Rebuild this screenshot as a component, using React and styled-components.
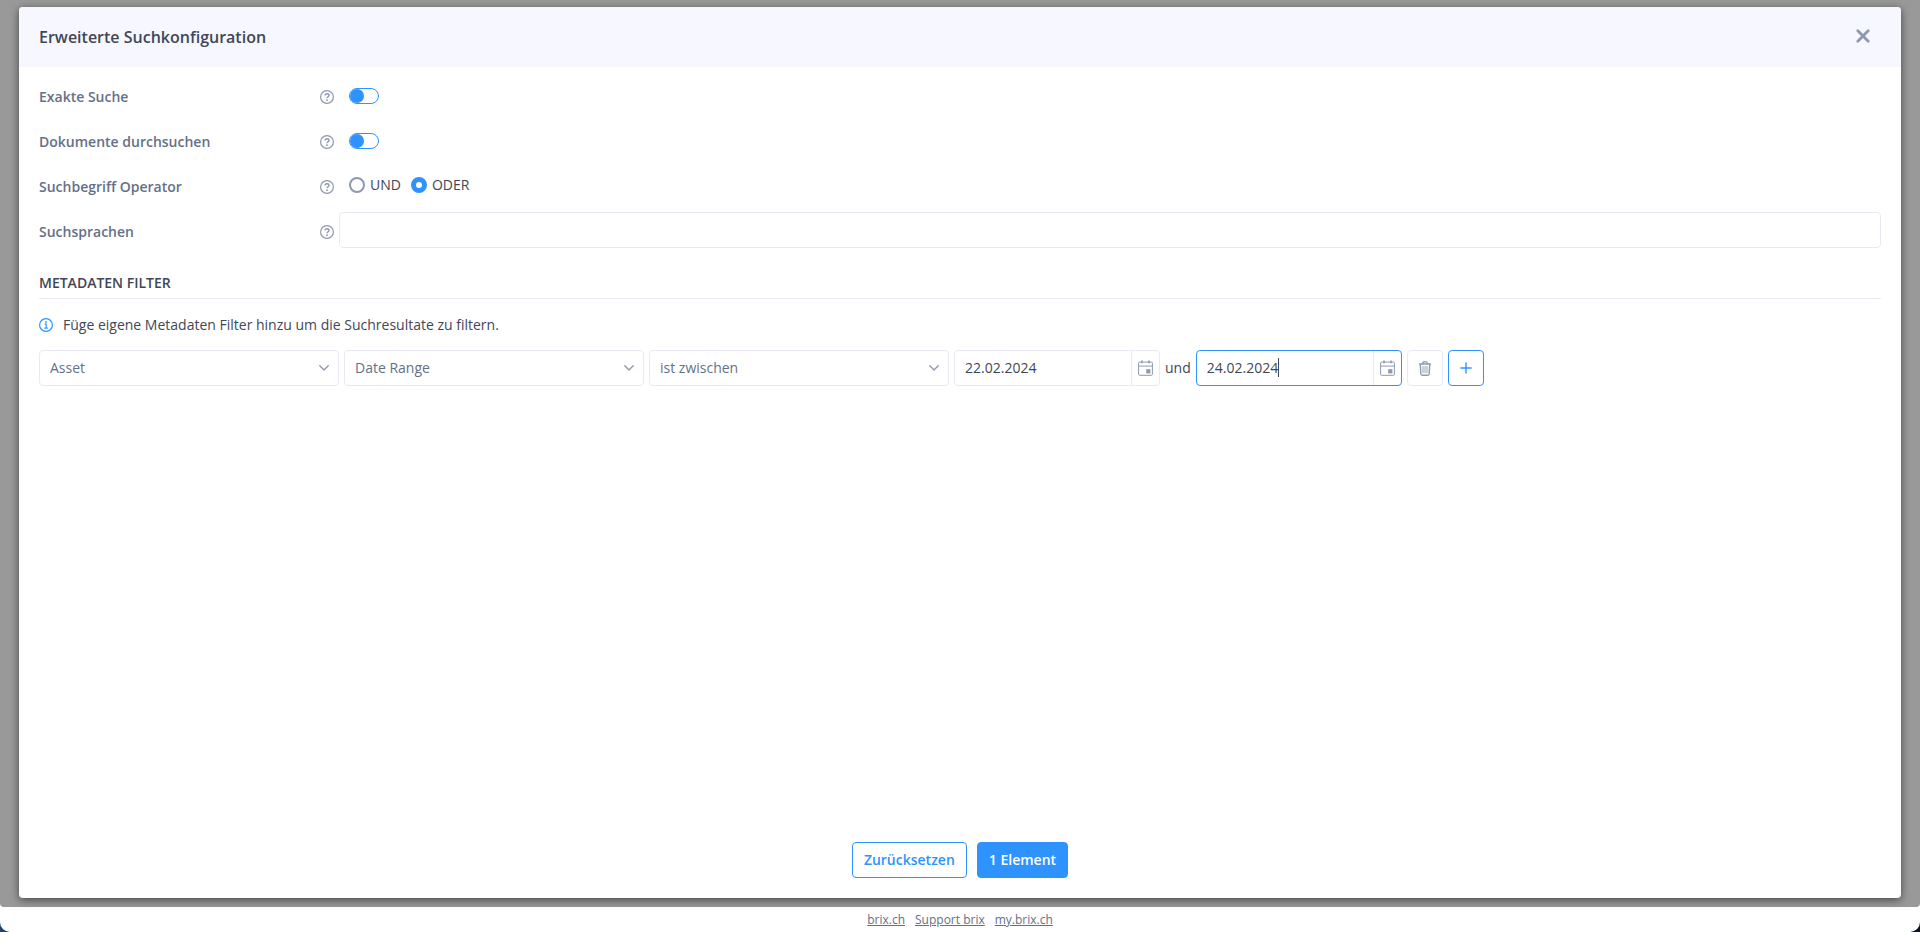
import { useId, useState } from "react";
import styled, { createGlobalStyle, ThemeProvider } from "styled-components";

const theme = {
  text: "#3f4757",
  label: "#657088",
  icon: "#8d99b0",
  primary: "#2f93ff",
  border: "#e8e9f4",
  header: "#f7f7ff",
};

const GlobalStyle = createGlobalStyle`
  *, *::before, *::after {
    box-sizing: border-box;
  }

  body {
    margin: 0;
    background: linear-gradient(90deg, #1c4470, #0c1422);
    color: ${theme.text};
    font-family: "Open Sans", "Noto Sans", sans-serif;
    font-size: 14px;
    line-height: 20px;
  }

  button, input, select {
    margin: 0;
    color: inherit;
    font: inherit;
  }

  svg {
    display: block;
    flex: none;
  }
`;

const Page = styled.div`
  display: flex;
  flex-direction: column;
  min-height: 100vh;
  background: #fff;
  border-radius: 0 0 10px 10px;
  overflow: hidden;
`;

const Backdrop = styled.main`
  display: flex;
  flex: 1;
  padding: 7px 19px 9px;
  background: #999;
  border-radius: 0 0 4px 4px;
`;

const Dialog = styled.section`
  display: flex;
  flex: 1;
  flex-direction: column;
  min-width: 0;
  background: #fff;
  border-radius: 4px;
  box-shadow: 0 2px 8px rgba(0, 0, 0, 0.55);
  overflow: hidden;
`;

const Header = styled.header`
  display: flex;
  align-items: center;
  justify-content: space-between;
  height: 60px;
  padding: 0 20px;
  background: ${(props) => props.theme.header};
`;

const Title = styled.h1`
  margin: 0;
  font-size: 16px;
  font-weight: 600;
`;

const CloseButton = styled.button`
  display: flex;
  align-items: center;
  justify-content: center;
  width: 36px;
  height: 36px;
  padding: 0 0 2px;
  background: none;
  border: 0;
  color: ${(props) => props.theme.icon};
  cursor: pointer;
`;

const Content = styled.div`
  flex: 1;
  padding: 10px 20px;
`;

const Form = styled.div`
  display: flex;
  flex-direction: column;
  gap: 5px;
`;

const Row = styled.div`
  display: grid;
  grid-template-columns: 281px 19px 1fr;
  align-items: start;
`;

const Label = styled.label`
  color: ${(props) => props.theme.label};
  font-weight: 600;
  line-height: 40px;
`;

const Help = styled.span`
  display: flex;
  align-items: center;
  height: 40px;
  color: ${(props) => props.theme.icon};
`;

const Control = styled.div`
  display: flex;
  align-items: center;
  gap: 10px;
  height: ${(props) => (props.$switch ? 38 : 36)}px;
  padding-left: 10px;
`;

const Switch = styled.input`
  width: 30px;
  height: 16px;
  appearance: none;
  background: #fff;
  border: 1px solid ${(props) => props.theme.primary};
  border-radius: 8px;
  cursor: pointer;

  &::before {
    content: "";
    display: block;
    width: 14px;
    height: 14px;
    background: ${(props) => props.theme.primary};
    border-radius: 50%;
  }

  &:checked::before {
    margin-left: auto;
  }
`;

const RadioLabel = styled.label`
  display: flex;
  align-items: center;
  gap: 5px;
`;

const Radio = styled.input`
  width: 16px;
  height: 16px;
  appearance: none;
  background: #fff;
  border: 2px solid ${(props) => props.theme.icon};
  border-radius: 50%;
  cursor: pointer;

  &:checked {
    border: 5px solid ${(props) => props.theme.primary};
  }
`;

const TextInput = styled.input`
  width: 100%;
  height: 36px;
  padding: 0 10px;
  background: #fff;
  border: 1px solid ${(props) => props.theme.border};
  border-radius: 4px;
  outline: none;
`;

const SectionTitle = styled.h2`
  margin: 21px 0 0;
  padding-bottom: 5px;
  border-bottom: 1px solid ${(props) => props.theme.border};
  font-size: 14px;
  font-weight: 600;
  text-transform: uppercase;
`;

const Hint = styled.p`
  display: flex;
  align-items: center;
  gap: 10px;
  margin: 16px 0 15px;

  svg {
    color: ${(props) => props.theme.primary};
  }
`;

const FilterRow = styled.div`
  display: flex;
  flex-wrap: wrap;
  align-items: center;
  gap: 5px;
`;

const SelectBox = styled.div`
  display: grid;
  width: 300px;
  align-items: center;
  color: ${(props) => props.theme.label};

  > * {
    grid-area: 1 / 1;
  }

  svg {
    justify-self: end;
    margin-right: 10px;
    color: ${(props) => props.theme.icon};
    pointer-events: none;
  }
`;

const Select = styled.select`
  width: 100%;
  height: 36px;
  padding: 0 30px 0 10px;
  appearance: none;
  background: #fff;
  border: 1px solid ${(props) => props.theme.border};
  border-radius: 4px;
`;

const DateBox = styled.div`
  position: relative;
  display: flex;
  width: 206px;
  height: 36px;
  border: 1px solid
    ${(props) => (props.$active ? props.theme.primary : props.theme.border)};
  border-radius: 4px;
`;

const DateInput = styled.input`
  flex: 1;
  min-width: 0;
  padding: 0 10px;
  background: none;
  border: 0;
  outline: none;
  caret-color: transparent;
`;

const Caret = styled.span`
  position: absolute;
  top: 7px;
  left: 81px;
  width: 1px;
  height: 19px;
  background: ${(props) => props.theme.text};
`;

const CalendarButton = styled.button`
  display: flex;
  align-items: center;
  justify-content: center;
  width: 28px;
  padding: 0;
  background: none;
  border: 0;
  border-left: 1px solid ${(props) => props.theme.border};
  color: ${(props) => props.theme.icon};
  cursor: pointer;
`;

const IconButton = styled.button`
  display: flex;
  align-items: center;
  justify-content: center;
  width: 36px;
  height: 36px;
  padding: 0;
  background: #fff;
  border: 1px solid
    ${(props) => (props.$primary ? props.theme.primary : props.theme.border)};
  border-radius: 4px;
  color: ${(props) => (props.$primary ? props.theme.primary : props.theme.icon)};
  cursor: pointer;
`;

const Actions = styled.div`
  display: flex;
  justify-content: center;
  gap: 10px;
  padding-bottom: 20px;
`;

const Button = styled.button`
  height: 36px;
  padding: 0 11px;
  background: ${(props) => (props.$filled ? props.theme.primary : "#fff")};
  border: 1px solid ${(props) => props.theme.primary};
  border-radius: 4px;
  color: ${(props) => (props.$filled ? "#fff" : props.theme.primary)};
  font-weight: 600;
  cursor: pointer;
`;

const Footer = styled.footer`
  display: flex;
  justify-content: center;
  gap: 10px;
  height: 25px;
  font-size: 12px;
  line-height: 25px;
`;

const FooterLink = styled.a`
  color: ${(props) => props.theme.label};
`;

const HelpIcon = () => (
  <svg width="14" height="14" viewBox="0 0 14 14" fill="none" stroke="currentColor" strokeWidth="1.2">
    <circle cx="7" cy="7" r="6.4" />
    <path d="M5 5.6C5 4.4 5.9 3.8 7 3.8s2 .6 2 1.6C9 6.7 7 6.8 7 8.3" strokeWidth="1.4" />
    <circle cx="7" cy="10.2" r="0.9" fill="currentColor" stroke="none" />
  </svg>
);

const InfoIcon = () => (
  <svg width="14" height="14" viewBox="0 0 14 14" fill="none" stroke="currentColor" strokeWidth="1.2">
    <circle cx="7" cy="7" r="6.4" />
    <path d="M5.6 6.2h1.6v4M5.4 10.2h3.4" />
    <circle cx="7" cy="4" r="0.9" fill="currentColor" stroke="none" />
  </svg>
);

const CloseIcon = () => (
  <svg width="14" height="14" viewBox="0 0 14 14" fill="none" stroke="currentColor" strokeWidth="2.8" strokeLinecap="round">
    <path d="M1.8 1.8l10.4 10.4M12.2 1.8L1.8 12.2" />
  </svg>
);

const ChevronIcon = () => (
  <svg width="10" height="6" viewBox="0 0 10 6" fill="none" stroke="currentColor" strokeWidth="1.4" strokeLinecap="round" strokeLinejoin="round">
    <path d="M0.8 0.8L5 5l4.2-4.2" />
  </svg>
);

const CalendarIcon = () => (
  <svg width="15" height="16" viewBox="0 0 15 16" fill="none" stroke="currentColor">
    <rect x="0.6" y="2.1" width="13.8" height="13.2" rx="1" />
    <path d="M0.6 6.1h13.8" />
    <path d="M4 0.6v2.6M11 0.6v2.6" strokeWidth="1.6" />
    <rect x="8.2" y="9.2" width="4.2" height="4.2" fill="currentColor" stroke="none" />
  </svg>
);

const TrashIcon = () => (
  <svg width="12" height="15" viewBox="0 0 12 15" fill="none" stroke="currentColor" strokeLinecap="round">
    <path d="M0.7 3h10.6" strokeWidth="1.4" />
    <path d="M3.7 2.6C3.7 1.2 4.3 0.7 6 0.7s2.3.5 2.3 1.9" strokeWidth="1.3" />
    <path d="M1.3 3.4l.5 9.4c.1 1 .6 1.5 1.5 1.5h5.4c.9 0 1.4-.5 1.5-1.5l.5-9.4" strokeWidth="1.4" />
    <path d="M4 5.4v6.4M6 5.4v6.4M8 5.4v6.4" strokeWidth="0.9" />
  </svg>
);

const PlusIcon = () => (
  <svg width="12" height="12" viewBox="0 0 12 12" fill="none" stroke="currentColor" strokeWidth="1.4" strokeLinecap="round">
    <path d="M6 0.9v10.2M0.9 6h10.2" />
  </svg>
);

/* eslint-disable react/prop-types */
function SwitchRow({ label }) {
  const id = useId();

  return (
    <Row>
      <Label htmlFor={id}>{label}</Label>
      <Help>
        <HelpIcon />
      </Help>
      <Control $switch>
        <Switch id={id} type="checkbox" role="switch" />
      </Control>
    </Row>
  );
}

function FilterSelect({ label, value }) {
  return (
    <SelectBox>
      <Select aria-label={label} defaultValue={value}>
        <option>{value}</option>
      </Select>
      <ChevronIcon />
    </SelectBox>
  );
}

function DateField({ label, value, active }) {
  return (
    <DateBox $active={active}>
      <DateInput type="text" aria-label={label} defaultValue={value} />
      {active && <Caret />}
      <CalendarButton type="button" aria-label="Kalender">
        <CalendarIcon />
      </CalendarButton>
    </DateBox>
  );
}

function App() {
  const [operator, setOperator] = useState("ODER");

  return (
    <ThemeProvider theme={theme}>
      <GlobalStyle />
      <Page>
        <Backdrop>
          <Dialog role="dialog" aria-labelledby="dialog-title">
            <Header>
              <Title id="dialog-title">Erweiterte Suchkonfiguration</Title>
              <CloseButton type="button" aria-label="Schliessen">
                <CloseIcon />
              </CloseButton>
            </Header>

            <Content>
              <Form>
                <SwitchRow label="Exakte Suche" />
                <SwitchRow label="Dokumente durchsuchen" />

                <Row role="radiogroup" aria-labelledby="operator">
                  <Label as="span" id="operator">
                    Suchbegriff Operator
                  </Label>
                  <Help>
                    <HelpIcon />
                  </Help>
                  <Control>
                    {["UND", "ODER"].map((name) => (
                      <RadioLabel key={name}>
                        <Radio
                          type="radio"
                          name="operator"
                          checked={operator === name}
                          onChange={() => setOperator(name)}
                        />
                        {name}
                      </RadioLabel>
                    ))}
                  </Control>
                </Row>

                <Row>
                  <Label htmlFor="languages">Suchsprachen</Label>
                  <Help>
                    <HelpIcon />
                  </Help>
                  <TextInput id="languages" type="text" />
                </Row>
              </Form>

              <SectionTitle>Metadaten Filter</SectionTitle>
              <Hint>
                <InfoIcon />
                Füge eigene Metadaten Filter hinzu um die Suchresultate zu filtern.
              </Hint>

              <FilterRow>
                <FilterSelect label="Typ" value="Asset" />
                <FilterSelect label="Feld" value="Date Range" />
                <FilterSelect label="Bedingung" value="ist zwischen" />
                <DateField label="Von" value="22.02.2024" />
                <span>und</span>
                <DateField label="Bis" value="24.02.2024" active />
                <IconButton type="button" aria-label="Filter entfernen">
                  <TrashIcon />
                </IconButton>
                <IconButton type="button" aria-label="Filter hinzufügen" $primary>
                  <PlusIcon />
                </IconButton>
              </FilterRow>
            </Content>

            <Actions>
              <Button type="button">Zurücksetzen</Button>
              <Button type="button" $filled>
                1 Element
              </Button>
            </Actions>
          </Dialog>
        </Backdrop>

        <Footer>
          <FooterLink href="#brix">brix.ch</FooterLink>
          <FooterLink href="#support">Support brix</FooterLink>
          <FooterLink href="#my">my.brix.ch</FooterLink>
        </Footer>
      </Page>
    </ThemeProvider>
  );
}

export default App;
